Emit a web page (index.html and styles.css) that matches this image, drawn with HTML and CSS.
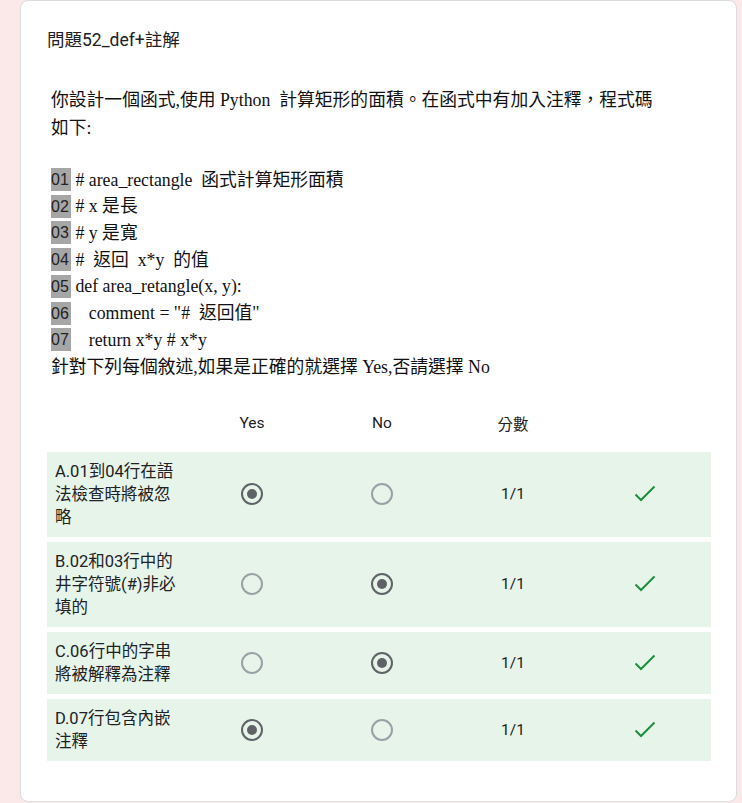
FILE: index.html
```html
<!DOCTYPE html>
<html lang="zh-Hant">
<head>
<meta charset="utf-8">
<title>問題52_def+註解</title>
<link rel="stylesheet" href="styles.css">
</head>
<body>
<div class="card">
  <div class="title">問題52_def+註解</div>
  <div class="desc">
    <p class="intro">你設計一個函式,使用 <span class="py">Python</span>&nbsp; 計算矩形的面積。在函式中有加入注釋，程式碼<br>如下:</p>
    <div class="code">
      <div class="cl"><span class="ln">01</span> # area_rectangle&nbsp; 函式計算矩形面積</div>
      <div class="cl"><span class="ln">02</span> # x 是長</div>
      <div class="cl"><span class="ln">03</span> # y 是寬</div>
      <div class="cl"><span class="ln">04</span> #&nbsp; 返回&nbsp; x*y&nbsp; 的值</div>
      <div class="cl"><span class="ln">05</span> def area_retangle(x, y):</div>
      <div class="cl"><span class="ln">06</span>&nbsp;&nbsp;&nbsp;&nbsp;comment = "#&nbsp; 返回值"</div>
      <div class="cl"><span class="ln">07</span>&nbsp;&nbsp;&nbsp;&nbsp;return x*y # x*y</div>
      <div class="cl">針對下列每個敘述,如果是正確的就選擇 Yes,否請選擇 No</div>
    </div>
  </div>

  <div class="grid head">
    <div></div>
    <div class="c">Yes</div>
    <div class="c">No</div>
    <div class="c">分數</div>
    <div></div>
  </div>

  <div class="rows">
    <div class="grid row">
      <div class="label">A.01到04行在語法檢查時將被忽略</div>
      <div class="c"><span class="radio on"></span></div>
      <div class="c"><span class="radio"></span></div>
      <div class="c score">1/1</div>
      <div class="c"><svg class="check" width="22" height="18" viewBox="0 0 22 18"><polyline points="1.5,9.5 7,15 20.5,1.5" fill="none" stroke="#1e8e3e" stroke-width="2"/></svg></div>
    </div>
    <div class="grid row">
      <div class="label">B.02和03行中的井字符號(#)非必填的</div>
      <div class="c"><span class="radio"></span></div>
      <div class="c"><span class="radio on"></span></div>
      <div class="c score">1/1</div>
      <div class="c"><svg class="check" width="22" height="18" viewBox="0 0 22 18"><polyline points="1.5,9.5 7,15 20.5,1.5" fill="none" stroke="#1e8e3e" stroke-width="2"/></svg></div>
    </div>
    <div class="grid row">
      <div class="label">C.06行中的字串將被解釋為注釋</div>
      <div class="c"><span class="radio"></span></div>
      <div class="c"><span class="radio on"></span></div>
      <div class="c score">1/1</div>
      <div class="c"><svg class="check" width="22" height="18" viewBox="0 0 22 18"><polyline points="1.5,9.5 7,15 20.5,1.5" fill="none" stroke="#1e8e3e" stroke-width="2"/></svg></div>
    </div>
    <div class="grid row">
      <div class="label">D.07行包含內嵌注釋</div>
      <div class="c"><span class="radio on"></span></div>
      <div class="c"><span class="radio"></span></div>
      <div class="c score">1/1</div>
      <div class="c"><svg class="check" width="22" height="18" viewBox="0 0 22 18"><polyline points="1.5,9.5 7,15 20.5,1.5" fill="none" stroke="#1e8e3e" stroke-width="2"/></svg></div>
    </div>
  </div>
</div>
</body>
</html>
```

FILE: styles.css
```css
* { box-sizing: border-box; }

body {
  margin: 0;
  background: #fbe9e9;
  font-family: Roboto, "Noto Sans CJK TC", sans-serif;
  color: #202124;
}

.card {
  margin-left: 20px;
  width: 717px;
  height: 802px;
  background: #fff;
  border: 1px solid #dadce0;
  border-radius: 8px;
  padding: 27px 25px 0 26px;
}

.title {
  font-size: 17.5px;
  line-height: 24px;
  height: 24px;
}

.desc {
  margin-left: 4px;
  margin-top: 34px;
  font-family: "Liberation Serif", "Noto Sans CJK TC", serif;
  font-size: 17.8px;
  color: #111;
}

.intro {
  margin: 0;
  line-height: 28px;
}

.code {
  margin-top: 24.7px;
  line-height: 26.7px;
}

.cl {
  height: 26.7px;
  white-space: nowrap;
}

.ln {
  display: inline-block;
  width: 20px;
  height: 23px;
  line-height: 23px;
  background: #a6a6a6;
  font-family: "Liberation Sans", sans-serif;
  font-size: 16px;
  color: #222;
  vertical-align: middle;
  position: relative;
  top: -2px;
}

.grid {
  display: grid;
  grid-template-columns: 140px 130px 130px 132px 1fr;
  align-items: center;
}

.head {
  margin-top: 30.5px;
  height: 24px;
  font-size: 15.5px;
}

.c {
  display: flex;
  justify-content: center;
  align-items: center;
}

.rows {
  margin-top: 17px;
  display: flex;
  flex-direction: column;
  gap: 5px;
}

.row {
  background: #e6f4ea;
  padding: 8px 0;
}

.label {
  padding-left: 8px;
  padding-right: 4px;
  font-size: 16.5px;
  line-height: 23px;
}

.radio {
  display: block;
  width: 22px;
  height: 22px;
  border: 2px solid #9aa0a6;
  border-radius: 50%;
  position: relative;
}

.radio.on {
  border-color: #5f6368;
}

.radio.on::after {
  content: "";
  position: absolute;
  left: 4px;
  top: 4px;
  width: 10px;
  height: 10px;
  border-radius: 50%;
  background: #5f6368;
}

.score {
  font-size: 15.5px;
}

.check {
  display: block;
}
```
